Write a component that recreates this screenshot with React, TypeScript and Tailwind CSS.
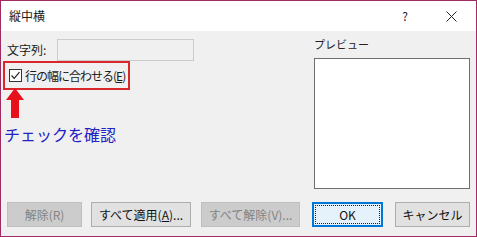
import React from "react";

const font = { fontFamily: '"Noto Sans CJK JP", "Noto Sans", sans-serif' };

function Btn({ label, disabled, className, primary }: { label: React.ReactNode; disabled?: boolean; className?: string; primary?: boolean }) {
  if (primary) {
    return (
      <div className={`h-[25px] border-2 border-[#0078d7] bg-[#e5f1fb] p-[1px] flex ${className ?? ""}`}>
        <div className="flex-1 border border-dotted border-[#222] flex items-center justify-center text-[12px] leading-none text-[#111]">{label}</div>
      </div>
    );
  }
  return (
    <div
      className={`h-[25px] border flex items-center justify-center text-[12px] leading-none whitespace-nowrap ${
        disabled ? "border-[#bfbfbf] bg-[#cccccc] text-[#838383]" : "border-[#adadad] bg-[#e1e1e1] text-[#111]"
      } ${className ?? ""}`}
    >
      {label}
    </div>
  );
}

export default function App() {
  return (
    <div style={font} className="w-[477px] h-[237px] border border-[#a02a62] bg-[#f0f0f0] flex flex-col text-[#1a1a1a] overflow-hidden">
      <div className="h-[30px] bg-white flex items-center shrink-0">
        <span className="pl-[8px] text-[12px] leading-none text-[#222]">縦中横</span>
        <span className="ml-auto mr-[38px] text-[12px] leading-none text-[#222]">?</span>
        <svg width="11" height="11" viewBox="0 0 11 11" className="mr-[19px]">
          <path d="M0.5 0.5 L10.5 10.5 M10.5 0.5 L0.5 10.5" stroke="#222" strokeWidth="1" />
        </svg>
      </div>
      <div className="flex flex-1">
        <div className="w-[312px] flex flex-col">
          <div className="mt-[8px] h-[22px] flex items-center">
            <span className="ml-[6px] w-[50px] text-[12px] leading-none">文字列:</span>
            <div className="w-[137px] h-[22px] border border-[#cccccc] bg-[#f0f0f0]" />
          </div>
          <div className="ml-[2px] w-[127px] h-[29px] border-2 border-[#d8282c] flex items-center">
            <div className="ml-[4px] w-[13px] h-[13px] border border-[#333] bg-white flex items-center justify-center shrink-0">
              <svg width="11" height="11" viewBox="0 0 11 11">
                <path d="M1.5 5.5 L4.2 8.3 L9.5 2.2" stroke="#222" strokeWidth="1.2" fill="none" />
              </svg>
            </div>
            <span className="ml-[3px] text-[12px] tracking-[-1px] leading-none whitespace-nowrap">
              行の幅に合わせる(<span className="underline">E</span>)
            </span>
          </div>
          <svg width="22" height="32" viewBox="0 0 22 32" className="ml-[3px] -mt-[3px]">
            <path d="M11 1 L20 13 L15 13 L15 31 L7 31 L7 13 L2 13 Z" fill="#e8101a" />
          </svg>
          <span className="mt-[7px] ml-[3px] text-[16px] leading-none text-[#2222c4] whitespace-nowrap">チェックを確認</span>
        </div>
        <div className="flex flex-col">
          <span className="mt-[8px] ml-[1px] text-[11px] leading-none text-[#222]">プレビュー</span>
          <div className="mt-[8px] ml-[1px] w-[156px] h-[131px] border border-[#6e6e6e] bg-white" />
        </div>
      </div>
      <div className="flex items-center h-[25px] mb-[9px] shrink-0">
        <Btn label="解除(R)" disabled className="ml-[6px] w-[75px]" />
        <Btn label={<>すべて適用(<span className="underline">A</span>)...</>} className="ml-[9px] w-[100px]" />
        <Btn label="すべて解除(V)..." disabled className="ml-[10px] w-[99px]" />
        <Btn label="OK" primary className="ml-[12px] w-[71px]" />
        <Btn label="キャンセル" className="ml-[12px] w-[75px]" />
      </div>
    </div>
  );
}
